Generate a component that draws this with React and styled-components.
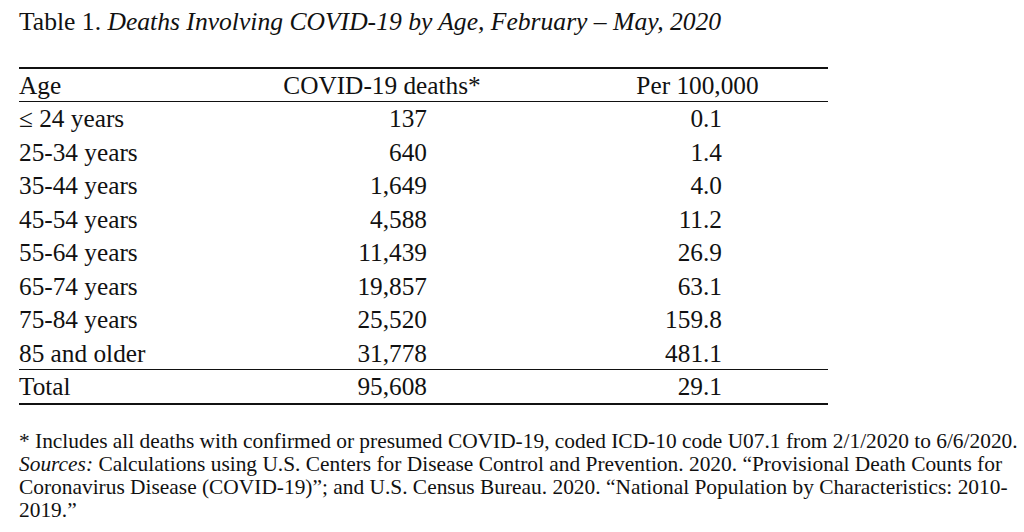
import React from 'react';
import styled, { createGlobalStyle } from 'styled-components';

const GlobalStyle = createGlobalStyle`
  html, body {
    margin: 0;
    padding: 0;
    background: #fff;
  }
  body {
    font-family: "Liberation Serif", "Times New Roman", serif;
    color: #111;
  }
`;

const Page = styled.div`
  width: 1024px;
  height: 532px;
  box-sizing: border-box;
  padding: 7px 0 0 19px;
  overflow: hidden;
`;

const Caption = styled.div`
  font-size: 25.6px;
  line-height: 30px;
  em {
    font-style: italic;
  }
`;

const Table = styled.div`
  margin-top: 30px;
  width: 809px;
  display: grid;
  grid-template-columns: 264px 198px 155px 123px 69px;
  border-top: 2px solid #111;
  border-bottom: 2px solid #111;
  font-size: 25.3px;
`;

const Row = styled.div`
  display: contents;
`;

const Cell = styled.div`
  height: ${(p) => p.h || 33.5}px;
  line-height: ${(p) => p.h || 33.5}px;
  white-space: nowrap;
  text-align: ${(p) => p.align || 'left'};
  padding-right: ${(p) => p.pr || 0}px;
  border-bottom: ${(p) => (p.rule ? '1.5px solid #111' : 'none')};
  box-sizing: border-box;
`;

const Foot = styled.div`
  margin-top: 25px;
  font-size: 21.4px;
  line-height: 23px;
  white-space: nowrap;
  em {
    font-style: italic;
  }
`;

const rows = [
  ['≤ 24 years', '137', '0.1'],
  ['25-34 years', '640', '1.4'],
  ['35-44 years', '1,649', '4.0'],
  ['45-54 years', '4,588', '11.2'],
  ['55-64 years', '11,439', '26.9'],
  ['65-74 years', '19,857', '63.1'],
  ['75-84 years', '25,520', '159.8'],
  ['85 and older', '31,778', '481.1'],
];

function DataRow({ label, deaths, rate, rule, h }) {
  return (
    <Row>
      <Cell rule={rule} h={h}>{label}</Cell>
      <Cell rule={rule} h={h} align="right" pr={54}>{deaths}</Cell>
      <Cell rule={rule} h={h} />
      <Cell rule={rule} h={h} align="right" pr={37}>{rate}</Cell>
      <Cell rule={rule} h={h} />
    </Row>
  );
}

export default function App() {
  return (
    <>
      <GlobalStyle />
      <Page>
        <Caption>
          Table 1. <em>Deaths Involving COVID-19 by Age, February – May, 2020</em>
        </Caption>
        <Table>
          <Row>
            <Cell rule h={33}>Age</Cell>
            <Cell rule h={33} align="center">COVID-19 deaths*</Cell>
            <Cell rule h={33} />
            <Cell rule h={33} align="center">Per 100,000</Cell>
            <Cell rule h={33} />
          </Row>
          {rows.map(([label, deaths, rate], i) => (
            <DataRow
              key={label}
              label={label}
              deaths={deaths}
              rate={rate}
              rule={i === rows.length - 1}
            />
          ))}
          <DataRow label="Total" deaths="95,608" rate="29.1" h={33} />
        </Table>
        <Foot>
          <div>* Includes all deaths with confirmed or presumed COVID-19, coded ICD-10 code U07.1 from 2/1/2020 to 6/6/2020.</div>
          <div>
            <em>Sources:</em> Calculations using U.S. Centers for Disease Control and Prevention. 2020. “Provisional Death Counts for
          </div>
          <div>Coronavirus Disease (COVID-19)”; and U.S. Census Bureau. 2020. “National Population by Characteristics: 2010-</div>
          <div>2019.”</div>
        </Foot>
      </Page>
    </>
  );
}
